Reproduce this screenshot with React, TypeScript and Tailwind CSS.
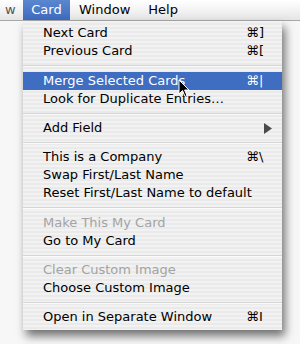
import React from "react";

type Item =
  | { kind: "item"; label: string; key?: string; disabled?: boolean; active?: boolean; submenu?: boolean }
  | { kind: "sep"; h: number };

const items: Item[] = [
  { kind: "item", label: "Next Card", key: "]" },
  { kind: "item", label: "Previous Card", key: "[" },
  { kind: "sep", h: 12 },
  { kind: "item", label: "Merge Selected Cards", key: "|", active: true },
  { kind: "item", label: "Look for Duplicate Entries…" },
  { kind: "sep", h: 11 },
  { kind: "item", label: "Add Field", submenu: true },
  { kind: "sep", h: 11 },
  { kind: "item", label: "This is a Company", key: "\\" },
  { kind: "item", label: "Swap First/Last Name" },
  { kind: "item", label: "Reset First/Last Name to default" },
  { kind: "sep", h: 12 },
  { kind: "item", label: "Make This My Card", disabled: true },
  { kind: "item", label: "Go to My Card" },
  { kind: "sep", h: 11 },
  { kind: "item", label: "Clear Custom Image", disabled: true },
  { kind: "item", label: "Choose Custom Image" },
  { kind: "sep", h: 11 },
  { kind: "item", label: "Open in Separate Window", key: "I" },
];

export default function App() {
  return (
    <div
      className="relative w-[300px] h-[344px] overflow-hidden bg-[#f7f7f7] text-[13px] text-black"
      style={{ fontFamily: '"DejaVu Sans", "Liberation Sans", sans-serif' }}
    >
      {/* Menu bar */}
      <div className="flex h-[21px] items-stretch border-b border-[#a9a9a9] bg-[linear-gradient(to_bottom,#ffffff,#f3f3f3_50%,#e4e4e4)]">
        <div className="flex w-[23px] items-center pl-[5px] text-[#555]">w</div>
        <div className="flex w-[47px] items-center justify-center bg-[linear-gradient(to_bottom,#5b87cf,#3d6bbf)] text-white">
          Card
        </div>
        <div className="flex items-center px-[9px]">Window</div>
        <div className="flex items-center px-[9px]">Help</div>
      </div>

      {/* Menu */}
      <div className="relative ml-[23px] w-[259px] bg-[repeating-linear-gradient(to_bottom,#f2f2f2_0px,#f2f2f2_2px,#eaeaea_2px,#eaeaea_4px)] pt-[3px] pb-[4px] shadow-[3px_6px_9px_rgba(0,0,0,0.55)]">
        {items.map((it, i) =>
          it.kind === "sep" ? (
            <div key={i} className="flex flex-col" style={{ height: it.h }}>
              <div className="h-[5px]" />
              <div className="h-px bg-[#d6d6d6]" />
              <div className="h-px bg-[#fafafa]" />
            </div>
          ) : (
            <div
              key={i}
              className={
                "flex h-[18px] items-center justify-between pl-[20px] " +
                (it.active ? "bg-[#3e6dc1] text-white" : it.disabled ? "text-[#a3a3a3]" : "text-black")
              }
            >
              <span className="whitespace-nowrap">{it.label}</span>
              {it.key ? (
                <span className="mr-[14px] flex w-[22px] whitespace-nowrap">
                  <span>⌘</span>
                  <span>{it.key}</span>
                </span>
              ) : it.submenu ? (
                <svg className="mr-[10px]" width="8" height="11" viewBox="0 0 8 11">
                  <path d="M0 0 L8 5.5 L0 11 Z" fill="#4a4a4a" />
                </svg>
              ) : null}
            </div>
          )
        )}
        {/* mouse pointer */}
        <svg
          className="absolute left-[155px] top-[58px]"
          width="12"
          height="19"
          viewBox="0 0 12 19"
        >
          <path
            d="M1 1 L1 15 L4.5 11.5 L7 17.5 L9 16.6 L6.6 11 L11 11 Z"
            fill="#000"
            stroke="#fff"
            strokeWidth="1"
            strokeLinejoin="round"
          />
        </svg>
      </div>
    </div>
  );
}
